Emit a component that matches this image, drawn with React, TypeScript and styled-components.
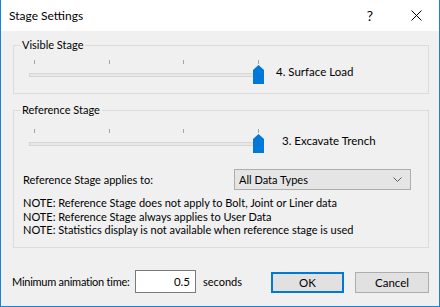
import React from "react";
import styled, { createGlobalStyle } from "styled-components";

const Global = createGlobalStyle`
  html, body { margin: 0; padding: 0; background: #ffffff; }
  body {
    font-family: Lato, "Noto Sans", sans-serif;
    font-size: 11px;
    color: #000000;
    white-space: nowrap;
  }
  * { box-sizing: border-box; }
`;

const Window = styled.div`
  width: 440px;
  height: 307px;
  border: 1px solid #1883d7;
  border-top: none;
  background: #f0f0f0;
  display: flex;
  flex-direction: column;
`;

const TitleBar = styled.div`
  height: 31px;
  flex-shrink: 0;
  background: #ffffff;
  display: flex;
  align-items: center;
  padding-left: 8px;
`;

const Title = styled.span`
  flex: 1;
  font-size: 12px;
  line-height: 16px;
`;

const TitleButton = styled.div`
  width: 46px;
  height: 31px;
  display: flex;
  align-items: center;
  justify-content: center;
  font-size: 14px;
  color: #000;
`;

const Content = styled.div`
  flex: 1;
  display: flex;
  flex-direction: column;
  padding: 6px 10px 13px 12px;
`;

const Group = styled.fieldset<{ $mt?: number; $pb: number }>`
  margin: ${(p) => p.$mt ?? 0}px 0 0 0;
  padding: 0 8px ${(p) => p.$pb}px 6px;
  border: 1px solid #dcdcdc;
  min-width: 0;
`;

const Legend = styled.legend`
  padding: 0 2px;
  font-size: 11px;
  line-height: 16px;
`;

const SliderRow = styled.div<{ $pt: number }>`
  display: flex;
  align-items: center;
  padding: ${(p) => p.$pt}px 0 0 9px;
`;

const Slider = styled.div`
  position: relative;
  width: 234px;
  height: 24px;
  flex-shrink: 0;
`;

const Track = styled.div`
  margin-top: 13px;
  height: 4px;
  border: 1px solid #d6d6d6;
  background: #e7e7e7;
`;

const Tick = styled.div`
  position: absolute;
  top: 0;
  width: 1px;
  height: 4px;
  background: #a5a5a5;
`;

const Thumb = styled.svg`
  position: absolute;
  top: 5px;
  left: 224px;
  width: 11px;
  height: 19px;
`;

const SliderLabel = styled.span<{ $gap: number }>`
  margin-left: ${(p) => p.$gap}px;
  line-height: 16px;
  font-size: 11.5px;
`;

const AppliesRow = styled.div`
  display: flex;
  align-items: center;
  margin-top: 16px;
  padding-left: 3px;
`;

const AppliesLabel = styled.span`
  width: 211px;
`;

const Select = styled.div`
  width: 177px;
  height: 21px;
  border: 1px solid #adadad;
  background: #e5e5e5;
  display: flex;
  align-items: center;
  padding: 0 8px 0 4px;
`;

const SelectText = styled.span`
  flex: 1;
`;

const Notes = styled.div`
  margin-top: 6px;
  padding-left: 3px;
  line-height: 13.5px;
`;

const BottomRow = styled.div`
  display: flex;
  align-items: center;
  margin-top: auto;
  margin-left: -1px;
`;

const TimeLabel = styled.span`
  width: 116px;
  letter-spacing: -0.25px;
`;

const Input = styled.div`
  width: 61px;
  height: 23px;
  margin: 0 7px 0 7px;
  border: 1px solid #7a7a7a;
  background: #ffffff;
  display: flex;
  align-items: center;
  justify-content: flex-end;
  padding-right: 5px;
  font-size: 11.5px;
`;

const Buttons = styled.div`
  margin-left: auto;
  margin-top: 2px;
  display: flex;
  gap: 11px;
`;

const Button = styled.div<{ $default?: boolean; $w: number }>`
  width: ${(p) => p.$w}px;
  height: 21px;
  background: #e1e1e1;
  border: ${(p) => (p.$default ? "2px solid #0078d7" : "1px solid #adadad")};
  display: flex;
  align-items: center;
  justify-content: center;
  font-size: 11.5px;
`;

const TICKS = [5, 80, 154, 229];

function StageSlider({ label, gap, pt }: { label: string; gap: number; pt: number }) {
  return (
    <SliderRow $pt={pt}>
      <Slider>
        {TICKS.map((x) => (
          <Tick key={x} style={{ left: x }} />
        ))}
        <Track />
        <Thumb viewBox="0 0 11 19">
          <polygon points="5.5,0 11,5 11,19 0,19 0,5" fill="#0078d7" />
        </Thumb>
      </Slider>
      <SliderLabel $gap={gap}>{label}</SliderLabel>
    </SliderRow>
  );
}

export default function App() {
  return (
    <>
      <Global />
      <Window>
        <TitleBar>
          <Title>Stage Settings</Title>
          <TitleButton>?</TitleButton>
          <TitleButton>
            <svg width="11" height="11" viewBox="0 0 11 11">
              <path d="M0.5 0.5 L10.5 10.5 M10.5 0.5 L0.5 10.5" stroke="#000" strokeWidth="1" />
            </svg>
          </TitleButton>
        </TitleBar>
        <Content>
          <Group $pb={9}>
            <Legend>Visible Stage</Legend>
            <StageSlider label="4. Surface Load" gap={13} pt={7} />
          </Group>
          <Group $mt={8} $pb={10}>
            <Legend>Reference Stage</Legend>
            <StageSlider label="3. Excavate Trench" gap={19} pt={11} />
            <AppliesRow>
              <AppliesLabel>Reference Stage applies to:</AppliesLabel>
              <Select>
                <SelectText>All Data Types</SelectText>
                <svg width="9" height="5" viewBox="0 0 9 5">
                  <polyline points="0.5,0.5 4.5,4.5 8.5,0.5" fill="none" stroke="#606060" strokeWidth="1" />
                </svg>
              </Select>
            </AppliesRow>
            <Notes>
              <div>NOTE: Reference Stage does not apply to Bolt, Joint or Liner data</div>
              <div>NOTE: Reference Stage always applies to User Data</div>
              <div>NOTE: Statistics display is not available when reference stage is used</div>
            </Notes>
          </Group>
          <BottomRow>
            <TimeLabel>Minimum animation time:</TimeLabel>
            <Input>0.5</Input>
            <span>seconds</span>
            <Buttons>
              <Button $default $w={73}>OK</Button>
              <Button $w={74}>Cancel</Button>
            </Buttons>
          </BottomRow>
        </Content>
      </Window>
    </>
  );
}
